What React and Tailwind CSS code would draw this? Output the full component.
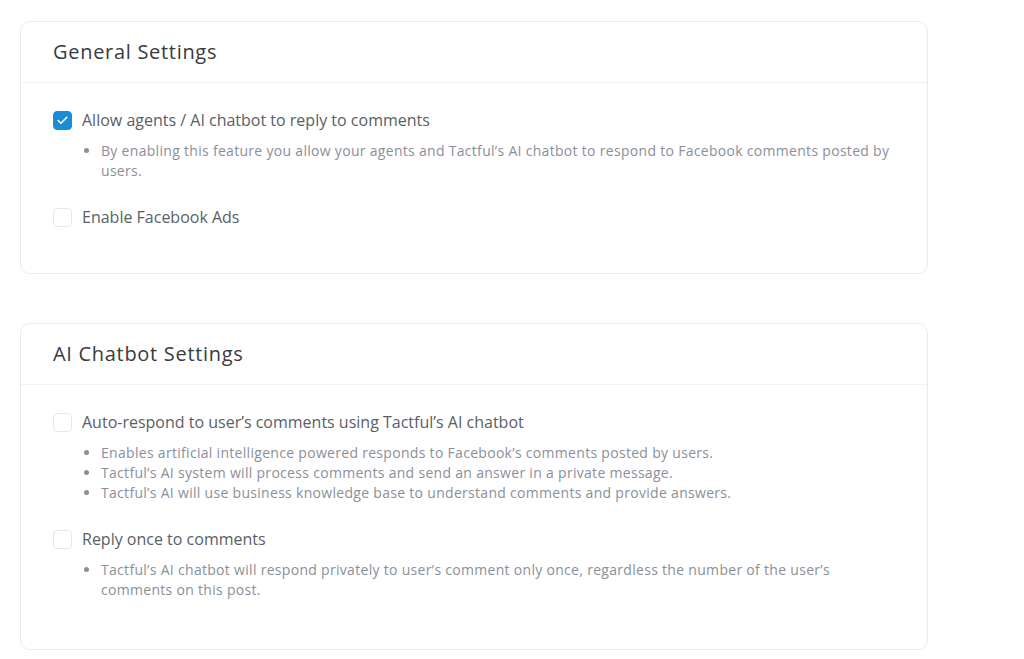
import React, { useState } from 'react';
import { Check } from 'lucide-react';

const Checkbox = ({ checked, onChange }) => (
  <button
    type="button"
    onClick={onChange}
    className={`w-[19px] h-[19px] shrink-0 rounded-[4px] flex items-center justify-center border ${
      checked ? 'bg-[#1a8cd8] border-[#1a8cd8]' : 'bg-white border-[#e3e7ee]'
    }`}
  >
    {checked && <Check className="w-[13px] h-[13px] text-white" strokeWidth={3} />}
  </button>
);

const Option = ({ label, notes, checked, onToggle }) => (
  <div>
    <label className="flex items-center gap-[10px] cursor-pointer">
      <Checkbox checked={checked} onChange={onToggle} />
      <span className="text-base leading-6 text-[#5a5e66]">{label}</span>
    </label>
    {notes && (
      <ul className="mt-[9px] pl-[48px] list-disc marker:text-[#8a8f99] text-sm leading-5 tracking-[0.3px] text-[#8a8f99]">
        {notes.map(n => (
          <li key={n}>{n}</li>
        ))}
      </ul>
    )}
  </div>
);

const Card = ({ title, children, bottom }) => (
  <section className="w-[908px] bg-white border border-[#e8ebf1] rounded-[10px]">
    <header className="px-8 py-4 border-b border-[#eef0f4]">
      <h2 className="text-xl leading-7 font-medium tracking-[0.7px] text-[#383b40]">{title}</h2>
    </header>
    <div className={`px-8 pt-[25px] flex flex-col gap-[24px] ${bottom}`}>{children}</div>
  </section>
);

export default function App() {
  const [opts, setOpts] = useState({ reply: true, ads: false, auto: false, once: false });
  const toggle = k => setOpts(o => ({ ...o, [k]: !o[k] }));

  return (
    <div className="min-h-screen bg-white pl-5 pt-[21px] pb-4" style={{ fontFamily: '"Open Sans", Lato, sans-serif' }}>
      <div className="flex flex-col gap-[49px]">
        <Card title="General Settings" bottom="pb-[44px]">
          <Option
            label="Allow agents / AI chatbot to reply to comments"
            checked={opts.reply}
            onToggle={() => toggle('reply')}
            notes={["By enabling this feature you allow your agents and Tactful’s AI chatbot to respond to Facebook comments posted by users."]}
          />
          <Option label="Enable Facebook Ads" checked={opts.ads} onToggle={() => toggle('ads')} />
        </Card>

        <Card title="AI Chatbot Settings" bottom="pb-[49px]">
          <Option
            label="Auto-respond to user’s comments using Tactful’s AI chatbot"
            checked={opts.auto}
            onToggle={() => toggle('auto')}
            notes={[
              'Enables artificial intelligence powered responds to Facebook’s comments posted by users.',
              'Tactful’s AI system will process comments and send an answer in a private message.',
              'Tactful’s AI will use business knowledge base to understand comments and provide answers.',
            ]}
          />
          <Option
            label="Reply once to comments"
            checked={opts.once}
            onToggle={() => toggle('once')}
            notes={["Tactful’s AI chatbot will respond privately to user’s comment only once, regardless the number of the user’s comments on this post."]}
          />
        </Card>
      </div>
    </div>
  );
}
